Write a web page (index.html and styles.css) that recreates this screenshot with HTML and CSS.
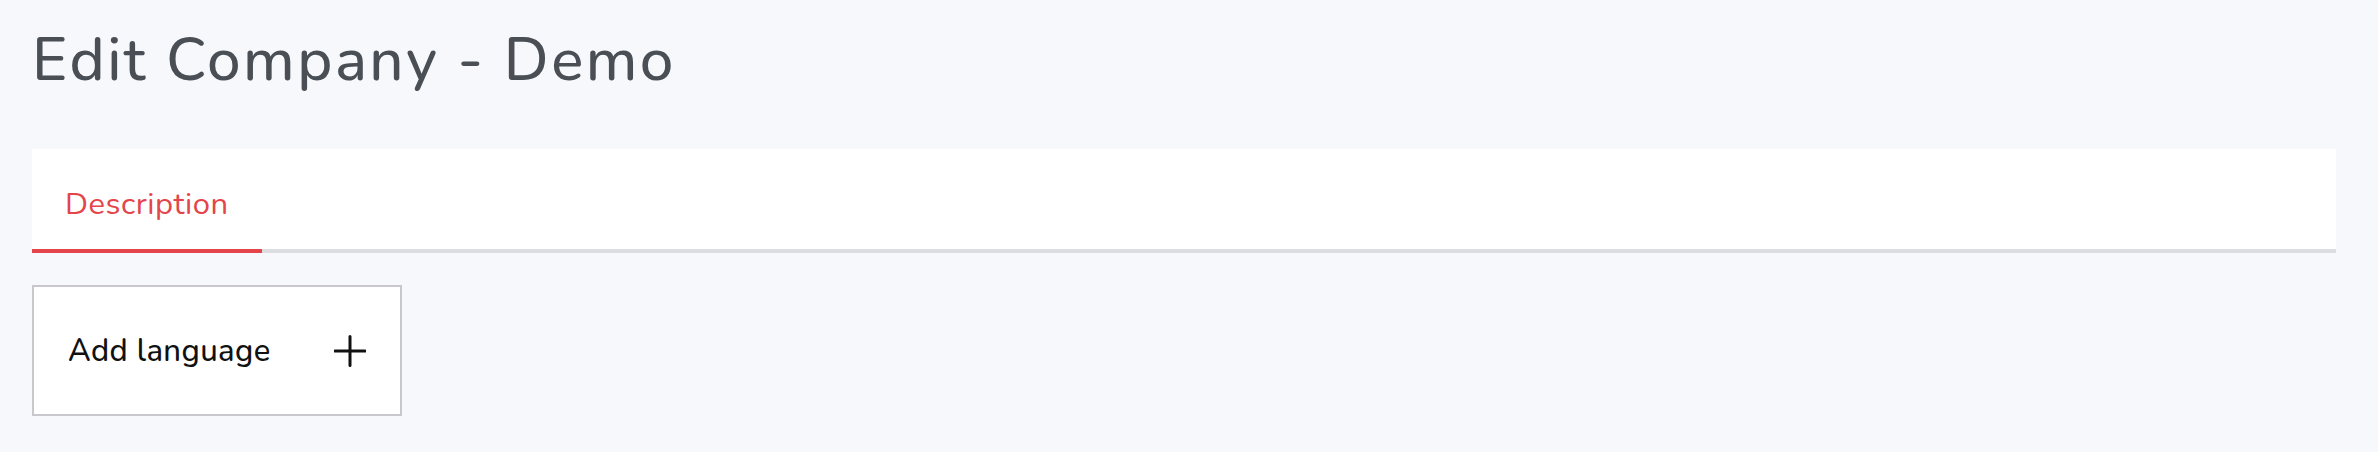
FILE: index.html
```html
<!DOCTYPE html>
<html lang="en">
<head>
<meta charset="utf-8">
<title>Edit Company - Demo</title>
<link rel="stylesheet" href="styles.css">
</head>
<body>
<div class="page">
  <h1 class="title">Edit Company - Demo</h1>
  <div class="tabs">
    <div class="tab tab-active">Description</div>
  </div>
  <div class="add-lang">
    <span class="add-lang-label">Add language</span>
    <svg class="plus" width="32" height="32" viewBox="0 0 32 32" aria-hidden="true">
      <path d="M16 1.5V30.5M1 16H31" stroke="#111" stroke-width="3" fill="none" stroke-linecap="round"/>
    </svg>
  </div>
</div>
</body>
</html>
```
FILE: styles.css
```css
html, body {
  margin: 0;
  padding: 0;
  background: #f7f8fc;
}
body {
  font-family: "Nunito", "Noto Sans", "Open Sans", sans-serif;
}
.page {
  padding: 0 42px 0 32px;
}
.title {
  margin: 25px 0 0 0;
  font-size: 60px;
  line-height: 70px;
  letter-spacing: 2.5px;
  font-weight: 500;
  color: #4a4f56;
}
.tabs {
  margin-top: 54px;
  background: #ffffff;
  box-shadow: inset 0 -4px 0 #dcdde1;
  display: flex;
}
.tab {
  width: 230px;
  box-sizing: border-box;
  padding: 35px 0 25px 33px;
  font-size: 31px;
  line-height: 40px;
  letter-spacing: 0.5px;
  color: #e3454a;
}
.tab-active {
  border-bottom: 4px solid #e3454a;
}
.add-lang {
  margin-top: 32px;
  width: 370px;
  height: 131px;
  box-sizing: border-box;
  border: 2px solid #c8c8cc;
  background: #ffffff;
  display: flex;
  align-items: center;
  justify-content: space-between;
  padding: 0 34px 0 34px;
}
.add-lang-label {
  font-size: 31px;
  letter-spacing: 0.4px;
  font-weight: 500;
  color: #111111;
}
.plus {
  display: block;
}
```
